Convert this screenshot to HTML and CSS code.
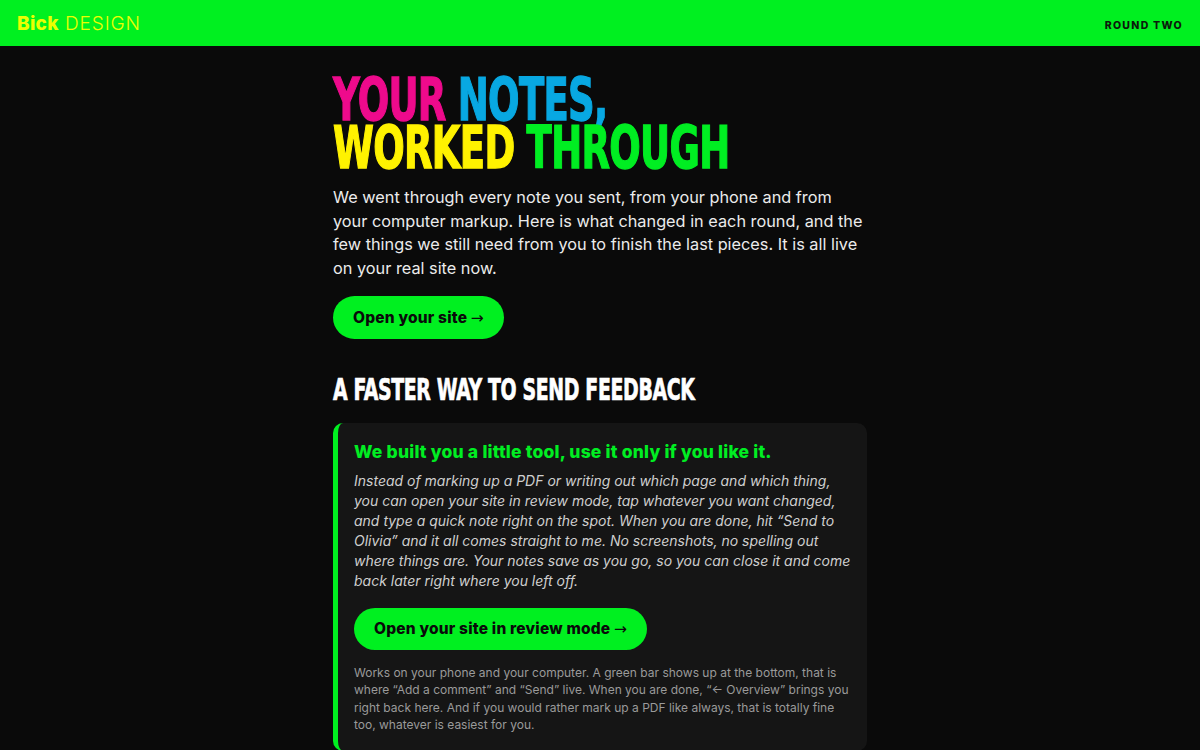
FILE: index.html
```html
<!DOCTYPE html>
<html lang="en">
<head>
<meta charset="utf-8">
<title>Bick Design — Round Two</title>
<link rel="stylesheet" href="styles.css">
</head>
<body>
<header class="topbar">
  <div class="brand"><b>Bick</b> DESIGN</div>
  <div class="round">ROUND TWO</div>
</header>
<main class="wrap">
  <h1 class="hero">
    <span class="hero-line"><span class="pink">YOUR</span> <span class="blue">NOTES,</span></span>
    <span class="hero-line"><span class="yellow">WORKED</span> <span class="green">THROUGH</span></span>
  </h1>
  <p class="lead">We went through every note you sent, from your phone and from your computer markup. Here is what changed in each round, and the few things we still need from you to finish the last pieces. It is all live on your real site now.</p>
  <a class="btn" href="#">Open your site <span class="arrow">→</span></a>
  <h2 class="section">A FASTER WAY TO SEND FEEDBACK</h2>
  <section class="card">
    <h3 class="card-title">We built you a little tool, use it only if you like it.</h3>
    <p class="card-text">Instead of marking up a PDF or writing out which page and which thing, you can open your site in review mode, tap whatever you want changed, and type a quick note right on the spot. When you are done, hit “Send to Olivia” and it all comes straight to me. No screenshots, no spelling out where things are. Your notes save as you go, so you can close it and come back later right where you left off.</p>
    <a class="btn btn-card" href="#">Open your site in review mode <span class="arrow">→</span></a>
    <p class="card-note">Works on your phone and your computer. A green bar shows up at the bottom, that is where “Add a comment” and “Send” live. When you are done, “← Overview” brings you right back here. And if you would rather mark up a PDF like always, that is totally fine too, whatever is easiest for you.</p>
  </section>
</main>
</body>
</html>
```
FILE: styles.css
```css
* { box-sizing: border-box; }
html, body { margin: 0; padding: 0; }
body {
  background: #0a0a0a;
  color: #eeeeee;
  font-family: Inter, "Open Sans", sans-serif;
}
.topbar {
  height: 46px;
  background: #00f020;
  display: flex;
  align-items: center;
  justify-content: space-between;
  padding: 0 17px;
}
.brand {
  color: #ecff00;
  font-size: 19px;
  font-weight: 300;
  letter-spacing: 0.9px;
}
.brand b { font-weight: 800; letter-spacing: 0.3px; }
.round {
  color: #0c1a0c;
  font-size: 10.5px;
  font-weight: 800;
  letter-spacing: 1.3px;
  padding-top: 4px;
}
.wrap {
  width: 534px;
  margin: 0 auto;
  padding-top: 30px;
}
.hero {
  margin: 0;
  font-family: "DejaVu Sans Condensed", "DejaVu Sans", sans-serif;
  font-weight: 700;
  font-size: 58px;
  line-height: 48px;
  letter-spacing: -1px;
  transform: scaleX(0.71);
  transform-origin: left top;
  -webkit-text-stroke: 1.3px currentColor;
  white-space: nowrap;
}
.hero-line {
  display: block;
  height: 48px;
}
.pink { color: #ee0a8c; }
.blue { color: #08a8e2; }
.yellow { color: #fff200; }
.green { color: #00ee22; }
.lead {
  margin: 14px 0 0;
  font-size: 16.3px;
  line-height: 23.5px;
  font-weight: 400;
  color: #ececec;
}
.btn {
  display: inline-block;
  margin-top: 16px;
  background: #00f020;
  color: #0a0a0a;
  text-decoration: none;
  font-weight: 800;
  font-size: 15.5px;
  letter-spacing: 0.2px;
  height: 43px;
  line-height: 43px;
  padding: 0 20px;
  border-radius: 22px;
}
.arrow {
  font-family: "DejaVu Sans", sans-serif;
  font-weight: 400;
  letter-spacing: 0;
}
.section {
  margin: 36px 0 0;
  font-family: "DejaVu Sans Condensed", "DejaVu Sans", sans-serif;
  font-weight: 700;
  font-size: 30px;
  line-height: 30px;
  color: #ffffff;
  letter-spacing: -0.5px;
  transform: scaleX(0.70);
  transform-origin: left top;
  -webkit-text-stroke: 0.7px currentColor;
  white-space: nowrap;
}
.card {
  margin-top: 18px;
  background: #151515;
  border-left: 5px solid #00f020;
  border-radius: 10px;
  padding: 17px 14px 18px 16px;
}
.card-title {
  margin: 0;
  color: #00ee22;
  font-size: 17.5px;
  font-weight: 800;
  letter-spacing: 0.2px;
  line-height: 24px;
}
.card-text {
  margin: 7px 0 0;
  font-style: italic;
  font-size: 14px;
  line-height: 20px;
  color: #cfcfcf;
}
.btn-card {
  margin-top: 17px;
  height: 42px;
  line-height: 42px;
}
.card-note {
  margin: 14px 0 0;
  font-size: 12px;
  line-height: 17.3px;
  color: #9a9a9a;
}
```
